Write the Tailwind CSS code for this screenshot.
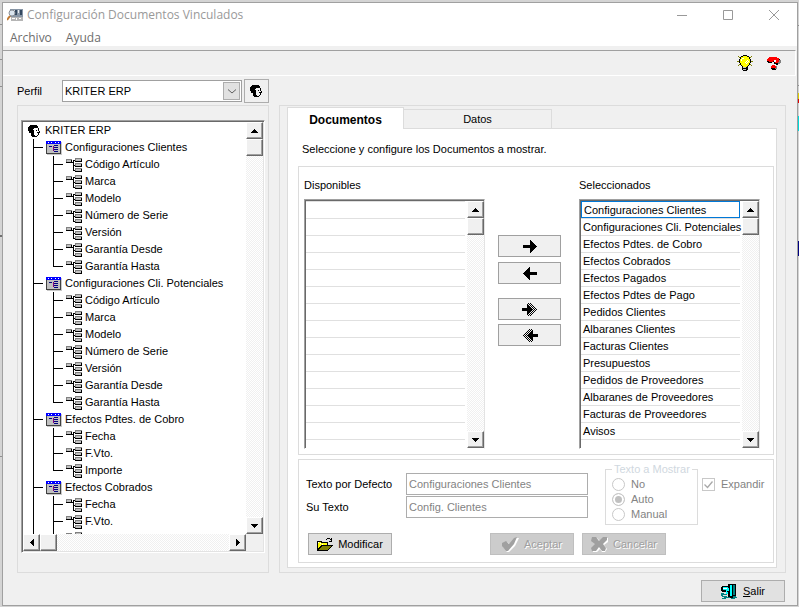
<!DOCTYPE html>
<html lang="es">
<head>
    <meta charset="UTF-8">
    <meta name="viewport" content="width=device-width, initial-scale=1.0">
    <title>Configuración Documentos Vinculados</title>
    <script src="https://cdn.jsdelivr.net/npm/@tailwindcss/browser@4"></script>
</head>
<body class="min-h-screen flex bg-[#d4d4d4] pt-[2px] pb-px font-['Liberation_Sans',sans-serif] text-[11px] leading-[17px] text-black">

    <!-- Iconos -->
    <svg class="hidden" aria-hidden="true">
        <symbol id="perfil" viewBox="0 0 13 14">
            <path d="M2 1h7v1h1v2H6v1H5v1h1v3H6v2h1v1h2v1H4v-1H3V9H1V7H0V3h1V2h1z" />
            <path d="M10 4h1v3h1v2h-1v1h-1V9h-1V8h2V7h-1zM8 6h1v1H8zM10 10h1v1h-1zM9 11h1v1H9z" />
        </symbol>
        <symbol id="documento" viewBox="0 0 16 14">
            <path fill="#c8c8c8" d="M1 1h15v13H1z" />
            <path fill="#404040" d="M0 0h15v13H0z" />
            <path fill="#c0c0c0" d="M1 3h13v9H1z" />
            <path fill="#0000ff" d="M0 0h15v3H0z" />
            <path fill="#fff" d="M2 1h1v1H2zM5 1h1v1H5zM9 1h1v1H9zM12 1h1v1h-1z" />
            <path fill="#000080" d="M3 5h3v1H3zM8 4h4v1H8zM8 6h4v1H8zM8 8h4v1H8zM8 10h4v1H8z" />
            <path fill="#800080" d="M7 5h1v5H7z" />
        </symbol>
        <symbol id="campo" viewBox="0 0 16 14">
            <path fill="#808080" d="M0 1h6v4H0zM9 0h7v4H9zM9 5h7v4H9zM9 10h7v4H9z" />
            <path fill="#c0c0c0" d="M1 2h4v2H1zM10 1h5v2h-5zM10 6h5v2h-5zM10 11h5v2h-5z" />
            <path d="M0 4h7v1H0zM5 2h1v3H5zM7 2h1v11H7zM8 2h1v1H8zM8 7h1v1H8zM8 12h1v1H8z" />
            <path d="M9 3h7v1H9zM9 8h7v1H9zM9 13h7v1H9zM15 1h1v3h-1zM15 6h1v3h-1zM15 11h1v3h-1z" />
        </symbol>
        <symbol id="arriba" viewBox="0 0 7 4"><path d="M3 0h1v1h1v1h1v1h1v1H0V3h1V2h1V1h1z" /></symbol>
        <symbol id="abajo" viewBox="0 0 7 4"><path d="M0 0h7v1H6v1H5v1H4v1H3V3H2V2H1V1H0z" /></symbol>
        <symbol id="izquierda" viewBox="0 0 4 7"><path d="M4 0v7H3V6H2V5H1V4H0V3h1V2h1V1h1V0z" /></symbol>
        <symbol id="derecha" viewBox="0 0 4 7"><path d="M0 0v7h1V6h1V5h1V4h1V3H3V2H2V1H1V0z" /></symbol>
        <symbol id="flecha" viewBox="0 0 14 13"><path d="M0 5h7V0l7 6.5L7 13V8H0z" /></symbol>
        <symbol id="doble" viewBox="0 0 16 13">
            <path fill="url(#trama)" d="M6 0h4l6 6.5L10 13H6l5-6.5z" />
            <path d="M0 5h5V0l6 6.5L5 13V8H0z" />
        </symbol>
    </svg>
    <svg class="absolute size-0" aria-hidden="true">
        <pattern id="trama" width="2" height="2" patternUnits="userSpaceOnUse">
            <path d="M0 0h1v1H0zM1 1h1v1H1z" />
        </pattern>
    </svg>

    <!-- Borde izquierdo del escritorio -->
    <div class="w-[2px] flex flex-col" aria-hidden="true">
        <div class="h-[23px] border-b border-[#909090]"></div>
        <div class="h-[35px] border-b border-[#909090]"></div>
        <div class="h-[27px] border-b border-[#909090]"></div>
        <div class="h-[150px] border-b-2 border-[#707070]"></div>
        <div class="h-[220px] border-b border-[#909090]"></div>
    </div>

    <!-- Ventana -->
    <main class="flex-1 min-w-0 flex flex-col border border-[#a0a0a0] bg-[#f0f0f0]">
        <header class="bg-white font-['Open_Sans','Noto_Sans',sans-serif] text-xs">
            <div class="flex items-center h-6 pl-1">
                <svg class="w-4 h-3" viewBox="0 0 16 12">
                    <path fill="#8795a5" d="M3 0h13v8H3z" />
                    <path fill="#e8edf2" d="M5 1h3v5H5zM11 1h1v3h-1z" />
                    <path fill="#33485f" d="M8 1h2v5H8zM13 1h2v5h-2z" />
                    <path fill="#b5b5b5" d="M4 8h12v4H4z" />
                    <path fill="#fff" d="M5 9h3v1H5zM9 9h1v2H9zM12 9h2v1h-2z" />
                    <circle cx="5" cy="4" r="3" fill="#dbe6ef" stroke="#8a9098" />
                    <path d="M3 7l-3 4" stroke="#c07830" stroke-width="2" />
                </svg>
                <h1 class="ml-1 flex-1 text-[#999]">Configuración Documentos Vinculados</h1>
                <button class="w-[46px] h-6 flex items-center justify-center" aria-label="Minimizar">
                    <svg class="w-[10px] h-[10px]" viewBox="0 0 10 10" stroke="#999"><path d="M0 5.5h10" /></svg>
                </button>
                <button class="w-[46px] h-6 flex items-center justify-center" aria-label="Maximizar">
                    <svg class="w-[10px] h-[10px]" viewBox="0 0 10 10" stroke="#999" fill="none"><path d="M.5 .5h9v9h-9z" /></svg>
                </button>
                <button class="w-[46px] h-6 flex items-center justify-center" aria-label="Cerrar">
                    <svg class="w-[10px] h-[10px]" viewBox="0 0 10 10" stroke="#999"><path d="M0 0l10 10M10 0L0 10" /></svg>
                </button>
            </div>
            <nav class="flex h-[19px] pl-[7px] gap-[14px] text-[#6d6d6d]">
                <button class="h-[22px]">Archivo</button>
                <button class="h-[22px]">Ayuda</button>
            </nav>
        </header>

        <!-- Barra de herramientas -->
        <div class="mt-1 mr-px h-[26px] border-t border-t-[#a0a0a0] border-b border-b-white border-r border-r-white flex justify-end items-center gap-[14px] pr-[14px]">
            <button aria-label="Sugerencias">
                <svg class="w-4 h-4" viewBox="0 0 16 16" shape-rendering="crispEdges">
                    <path fill="#808000" d="M1 1h1v1H1zM2 2h1v1H2zM14 1h1v1h-1zM13 2h1v1h-1zM0 6h2v1H0zM14 6h2v1h-2zM1 10h1v1H1zM2 9h1v1H2zM14 10h1v1h-1zM13 9h1v1h-1z" />
                    <path d="M6 0h4v1h2v1h1v2h1v4h-1v2h-1v1h-1v4h-1v1H6v-1H5v-4H4v-1H3V8H2V4h1V2h1V1h2z" />
                    <path fill="#ff0" d="M6 1h4v1h2v2h1v4h-1v2h-1v1h-1v1H6v-1H5v-1H4V8H3V4h1V2h2z" />
                    <path fill="#fff" d="M5 3h2v1H5zM4 4h1v2H4zM10 5h1v1h-1zM9 6h1v1H9zM11 6h1v1h-1zM10 7h1v1h-1zM8 7h1v1H8zM9 8h1v1H9z" />
                    <path fill="#c0c0c0" d="M6 12h3v1H6zM6 14h3v1H6z" />
                </svg>
            </button>
            <button aria-label="Ayuda">
                <svg class="w-[14px] h-[13px]" viewBox="0 0 14 13" shape-rendering="crispEdges">
                    <path d="M1 1h10v1h2v2h1v2h-1v1h-2v1H9V7H7V5H5v1H1V5H0V3h1zM5 9h5v3H9v1H5v-1H4v-1h1z" />
                    <path fill="#808080" d="M12 3h2v3h-1v1h-2V5h1zM8 9h2v3H8z" />
                    <path fill="red" d="M1 1h1V0h8v1h2v4h-1v1H8V4H6v1H2V4H0V2h1zM5 8h3v1h1v2H4V9h1z" />
                    <path fill="#fff" d="M7 3h2v2H7z" />
                </svg>
            </button>
        </div>

        <div class="flex gap-[10px] pl-[14px] pr-[11px] pt-[3px]">
            <!-- Perfil y árbol de documentos -->
            <section class="w-[252px] shrink-0 flex flex-col">
                <div class="flex items-center h-6">
                    <label for="perfilSelect" class="w-[45px]">Perfil</label>
                    <div class="relative flex-1">
                        <select id="perfilSelect" class="block w-full h-[22px] pl-[2px] appearance-none bg-white border border-[#a0a0a0]">
                            <option>KRITER ERP</option>
                        </select>
                        <span class="absolute right-[2px] top-[2px] w-[17px] h-[18px] border border-[#adadad] bg-[#e1e1e1] flex items-center justify-center pointer-events-none">
                            <svg class="w-2 h-[5px]" viewBox="0 0 8 5" fill="none" stroke="#606060"><path d="M0 .5l4 3.5l4-3.5" /></svg>
                        </span>
                    </div>
                    <button class="ml-[2px] w-[25px] h-6 border border-[#adadad] flex items-center justify-center" aria-label="Ver perfil">
                        <svg class="w-[13px] h-[14px]" shape-rendering="crispEdges"><use href="#perfil" /></svg>
                    </button>
                </div>
                <div class="mt-[2px] flex-1 border border-[#dcdcdc] pt-[14px] px-[3px]">
                    <div class="border-t border-l border-[#a0a0a0] border-r border-r-white border-b border-b-white bg-[#f0f0f0] shadow-[inset_1px_1px_0_#696969,inset_-1px_-1px_0_#e3e3e3] p-px">
                        <div class="flex">
                            <div id="arbol" class="flex-1 h-[412px] overflow-hidden bg-white whitespace-nowrap"></div>
                            <div class="w-[17px] flex flex-col bg-[repeating-conic-gradient(#f0f0f0_0_25%,#fff_0_50%)] bg-[length:2px_2px]">
                                <button class="size-[17px] bg-[#f0f0f0] border border-white border-r-[#696969] border-b-[#696969] shadow-[inset_-1px_-1px_0_#a0a0a0] flex items-center justify-center" aria-label="Subir"><svg class="w-[7px] h-1" shape-rendering="crispEdges"><use href="#arriba" /></svg></button>
                                <div class="h-[17px] bg-[#f0f0f0] border border-white border-r-[#696969] border-b-[#696969] shadow-[inset_-1px_-1px_0_#a0a0a0]"></div>
                                <button class="mt-auto size-[17px] bg-[#f0f0f0] border border-white border-r-[#696969] border-b-[#696969] shadow-[inset_-1px_-1px_0_#a0a0a0] flex items-center justify-center" aria-label="Bajar"><svg class="w-[7px] h-1" shape-rendering="crispEdges"><use href="#abajo" /></svg></button>
                            </div>
                        </div>
                        <div class="mr-[17px] h-[17px] flex bg-[repeating-conic-gradient(#f0f0f0_0_25%,#fff_0_50%)] bg-[length:2px_2px]">
                            <button class="size-[17px] bg-[#f0f0f0] border border-white border-r-[#696969] border-b-[#696969] shadow-[inset_-1px_-1px_0_#a0a0a0] flex items-center justify-center" aria-label="Izquierda"><svg class="w-1 h-[7px]" shape-rendering="crispEdges"><use href="#izquierda" /></svg></button>
                            <div class="w-[17px] bg-[#f0f0f0] border border-white border-r-[#696969] border-b-[#696969] shadow-[inset_-1px_-1px_0_#a0a0a0]"></div>
                            <button class="ml-auto size-[17px] bg-[#f0f0f0] border border-white border-r-[#696969] border-b-[#696969] shadow-[inset_-1px_-1px_0_#a0a0a0] flex items-center justify-center" aria-label="Derecha"><svg class="w-1 h-[7px]" shape-rendering="crispEdges"><use href="#derecha" /></svg></button>
                        </div>
                    </div>
                </div>
            </section>

            <!-- Pestañas -->
            <section class="mt-[26px] flex-1 min-w-0 border border-[#dcdcdc] pt-px pb-1 pl-[7px] pr-2">
                <div class="flex items-end" role="tablist">
                    <button class="w-[117px] h-[22px] -mb-px relative bg-white border border-b-0 border-[#dcdcdc] pt-[2px] text-xs font-bold" role="tab" aria-selected="true">Documentos</button>
                    <button class="w-[148px] h-[19px] border border-l-0 border-b-0 border-[#dcdcdc]" role="tab">Datos</button>
                </div>
                <div class="bg-white border border-[#dcdcdc] pt-3 pb-1 pl-[10px] pr-[2px]">
                    <p class="pl-1">Seleccione y configure los Documentos a mostrar.</p>

                    <div class="mt-2 border border-[#dcdcdc] flex pt-[10px] pb-[5px] pl-[5px]">
                        <div>
                            <h2>Disponibles</h2>
                            <div class="mt-[5px] w-[181px] h-[250px] flex border-t border-l border-[#a0a0a0] border-r border-r-[#e3e3e3] border-b border-b-white shadow-[inset_1px_1px_0_#696969] pt-px pl-px">
                                <ul id="disponibles" class="flex-1 mr-[2px] overflow-y-clip"></ul>
                                <div class="w-[17px] flex flex-col bg-[repeating-conic-gradient(#f0f0f0_0_25%,#fff_0_50%)] bg-[length:2px_2px]">
                                    <button class="size-[17px] bg-[#f0f0f0] border border-white border-r-[#696969] border-b-[#696969] shadow-[inset_-1px_-1px_0_#a0a0a0] flex items-center justify-center" aria-label="Subir"><svg class="w-[7px] h-1" shape-rendering="crispEdges"><use href="#arriba" /></svg></button>
                                    <div class="h-[17px] bg-[#f0f0f0] border border-white border-r-[#696969] border-b-[#696969] shadow-[inset_-1px_-1px_0_#a0a0a0]"></div>
                                    <button class="mt-auto size-[17px] bg-[#f0f0f0] border border-white border-r-[#696969] border-b-[#696969] shadow-[inset_-1px_-1px_0_#a0a0a0] flex items-center justify-center" aria-label="Bajar"><svg class="w-[7px] h-1" shape-rendering="crispEdges"><use href="#abajo" /></svg></button>
                                </div>
                            </div>
                        </div>

                        <div class="ml-[13px] mr-[18px] w-[63px] pt-[58px] flex flex-col">
                            <button class="h-[22px] border border-[#a0a0a0] bg-[#f0f0f0] flex items-center justify-center" aria-label="Añadir"><svg class="w-[14px] h-[13px]" shape-rendering="crispEdges"><use href="#flecha" /></svg></button>
                            <button class="mt-[5px] h-[22px] border border-[#a0a0a0] bg-[#f0f0f0] flex items-center justify-center" aria-label="Quitar"><svg class="w-[14px] h-[13px] rotate-180" shape-rendering="crispEdges"><use href="#flecha" /></svg></button>
                            <button class="mt-[14px] h-[22px] border border-[#a0a0a0] bg-[#f0f0f0] flex items-center justify-center" aria-label="Añadir todos"><svg class="w-4 h-[13px]" shape-rendering="crispEdges"><use href="#doble" /></svg></button>
                            <button class="mt-1 h-[22px] border border-[#a0a0a0] bg-[#f0f0f0] flex items-center justify-center" aria-label="Quitar todos"><svg class="w-4 h-[13px] rotate-180" shape-rendering="crispEdges"><use href="#doble" /></svg></button>
                        </div>

                        <div>
                            <h2>Seleccionados</h2>
                            <div class="mt-[5px] w-[181px] h-[250px] flex border-t border-l border-[#a0a0a0] border-r border-r-[#e3e3e3] border-b border-b-white shadow-[inset_1px_1px_0_#696969] pt-px pl-px">
                                <ul id="seleccionados" class="flex-1 min-w-0 mr-[2px] overflow-y-clip whitespace-nowrap"></ul>
                                <div class="w-[17px] flex flex-col bg-[repeating-conic-gradient(#f0f0f0_0_25%,#fff_0_50%)] bg-[length:2px_2px]">
                                    <button class="size-[17px] bg-[#f0f0f0] border border-white border-r-[#696969] border-b-[#696969] shadow-[inset_-1px_-1px_0_#a0a0a0] flex items-center justify-center" aria-label="Subir"><svg class="w-[7px] h-1" shape-rendering="crispEdges"><use href="#arriba" /></svg></button>
                                    <div class="h-[17px] bg-[#f0f0f0] border border-white border-r-[#696969] border-b-[#696969] shadow-[inset_-1px_-1px_0_#a0a0a0]"></div>
                                    <button class="mt-auto size-[17px] bg-[#f0f0f0] border border-white border-r-[#696969] border-b-[#696969] shadow-[inset_-1px_-1px_0_#a0a0a0] flex items-center justify-center" aria-label="Bajar"><svg class="w-[7px] h-1" shape-rendering="crispEdges"><use href="#abajo" /></svg></button>
                                </div>
                            </div>
                        </div>
                    </div>

                    <!-- Edición del texto -->
                    <form class="mt-1 border border-[#dcdcdc] pt-[2px] pb-[7px] pl-[7px]">
                        <div class="flex">
                            <div class="pt-[11px] flex flex-col gap-px">
                                <div class="flex items-center">
                                    <label for="textoDefecto" class="w-[100px]">Texto por Defecto</label>
                                    <input id="textoDefecto" class="w-[182px] h-[22px] border border-[#adadad] px-[2px] text-[#838383]" value="Configuraciones Clientes" disabled>
                                </div>
                                <div class="flex items-center">
                                    <label for="suTexto" class="w-[100px]">Su Texto</label>
                                    <input id="suTexto" class="w-[182px] h-[22px] border border-[#adadad] px-[2px] text-[#838383]" value="Config. Clientes" disabled>
                                </div>
                            </div>
                            <fieldset class="ml-[17px] w-[93px] border border-[#dcdcdc] pl-[6px] pb-[2px] leading-[15px] text-[#838383]" disabled>
                                <legend class="px-[2px] text-[#d0d8e0]">Texto a Mostrar</legend>
                                <label class="flex items-center gap-[6px]"><input type="radio" name="mostrar" class="appearance-none size-[13px] rounded-full border border-[#c8c8c8]">No</label>
                                <label class="flex items-center gap-[6px]"><input type="radio" name="mostrar" class="appearance-none size-[13px] rounded-full border border-[#c8c8c8] checked:bg-[#c0c0c0] checked:shadow-[inset_0_0_0_2px_white]" checked>Auto</label>
                                <label class="flex items-center gap-[6px]"><input type="radio" name="mostrar" class="appearance-none size-[13px] rounded-full border border-[#c8c8c8]">Manual</label>
                            </fieldset>
                            <label class="ml-1 mt-[14px] h-[17px] flex items-center gap-[6px] text-[#838383]">
                                <span class="relative size-[13px]">
                                    <input type="checkbox" class="block appearance-none size-[13px] border border-[#c8c8c8]" checked disabled>
                                    <svg class="absolute inset-0 size-[13px]" viewBox="0 0 13 13" fill="none" stroke="#a8a8a8"><path d="M2.5 6.5l3 3l5-6" stroke-width="1.3" /></svg>
                                </span>
                                Expandir
                            </label>
                        </div>
                        <div class="mt-2 flex pl-[2px]">
                            <button type="button" class="w-[84px] h-[22px] border border-[#adadad] bg-[#e1e1e1] flex items-center justify-center gap-[5px]">
                                <svg class="w-4 h-[13px]" viewBox="0 0 16 13" shape-rendering="crispEdges">
                                    <path d="M0 3h5v1h6v3h5v1h-1v1h-1v1h-1v1h-1v1h-1v1H0zM9 1h1V0h3v1h1V0h1v4h-3V3h2V2h-1V1h-3v1H9z" />
                                    <path fill="#ff0" d="M1 4h3v1h6v2H4v1H3v1H2v1H1z" />
                                    <path fill="#fff" d="M1 4h1v1H1zM3 5h1v1H3zM5 6h1v1H5z" />
                                    <path fill="#808000" d="M5 8h9v1h-1v1h-1v1h-1v1H2v-1h1v-1h1V9h1z" />
                                </svg>
                                Modificar
                            </button>
                            <button type="button" class="ml-[98px] w-[84px] h-[22px] border border-[#bfbfbf] bg-[#ccc] flex items-center justify-center gap-[5px] text-[#a0a0a0] [text-shadow:1px_1px_0_#fff]" disabled>
                                <svg class="w-[17px] h-[15px]" viewBox="0 0 17 15">
                                    <path fill="#fff" d="M1 7l4-2l3 2l6-6h3l-4 8l-6 6H5l-4-5z" />
                                    <path fill="#a0a0a0" d="M0 6l4-2l3 3l5-6l3-1l-3 7l-6 7H4L0 9z" />
                                </svg>
                                Aceptar
                            </button>
                            <button type="button" class="ml-2 w-[84px] h-[22px] border border-[#bfbfbf] bg-[#ccc] flex items-center justify-center gap-[5px] text-[#a0a0a0] [text-shadow:1px_1px_0_#fff]" disabled>
                                <svg class="w-[17px] h-[15px]" viewBox="0 0 17 15">
                                    <path fill="#fff" d="M2 1h4l3 3l4-3h4v4l-4 3l3 4l-2 3h-3l-2-3l-3 3H2v-4l4-3l-4-4z" />
                                    <path fill="#a0a0a0" d="M1 0h4l3 4l4-4h4v3l-4 4l3 4l-1 3h-3l-3-4l-3 4H1l-1-3l4-4l-4-3z" />
                                </svg>
                                Cancelar
                            </button>
                        </div>
                    </form>
                </div>
            </section>
        </div>

        <footer class="flex justify-end pt-[7px] pb-[3px] pr-3">
            <button class="w-[84px] h-[22px] border border-[#adadad] bg-[#e1e1e1] flex items-center justify-center gap-[6px]">
                <svg class="w-4 h-[15px]" viewBox="0 0 16 15" shape-rendering="crispEdges">
                    <path fill="#008080" d="M0 9h3v1h3v1H2v1h4v1H1v-1H0zM11 12h4v1h1v1h-2v1h-4v-1H3v-1h8zM1 14h4v1H1z" />
                    <path d="M1 2h6V0h8v12h-3v2H9v-1H7v-3H5V8H1V7H0V3h1z" />
                    <path fill="#0ff" d="M2 3h5v1h1v3H6v1H5V6H2zM9 1h2v11H9zM5 8h2v2H5z" />
                    <path fill="#008080" d="M12 1h2v10h-2z" />
                    <path fill="#fff" d="M2 4h4v1H2z" />
                </svg>
                <span><u>S</u>alir</span>
            </button>
        </footer>
    </main>

    <!-- Borde derecho del escritorio -->
    <div class="w-px flex flex-col" aria-hidden="true">
        <div class="h-6 border-b border-[#909090]"></div>
        <div class="h-[60px] border-b border-[#909090]"></div>
        <div class="mt-[7px] h-[6px] bg-[#e0d000]"></div>
        <div class="h-1 bg-[#e00000]"></div>
        <div class="mt-[13px] h-[15px] bg-[#00d8d8]"></div>
        <div class="mt-[110px] h-[15px] bg-[#000080]"></div>
    </div>

    <script>
        const arbol = [
            { nombre: "Configuraciones Clientes", campos: ["Código Artículo", "Marca", "Modelo", "Número de Serie", "Versión", "Garantía Desde", "Garantía Hasta"] },
            { nombre: "Configuraciones Cli. Potenciales", campos: ["Código Artículo", "Marca", "Modelo", "Número de Serie", "Versión", "Garantía Desde", "Garantía Hasta"] },
            { nombre: "Efectos Pdtes. de Cobro", campos: ["Fecha", "F.Vto.", "Importe"] },
            // el último campo queda a medias bajo la barra: solo asoma su icono
            { nombre: "Efectos Cobrados", campos: ["Fecha", "F.Vto.", ""] }
        ];

        const seleccionados = [
            "Configuraciones Clientes", "Configuraciones Cli. Potenciales", "Efectos Pdtes. de Cobro", "Efectos Cobrados",
            "Efectos Pagados", "Efectos Pdtes de Pago", "Pedidos Clientes", "Albaranes Clientes", "Facturas Clientes",
            "Presupuestos", "Pedidos de Proveedores", "Albaranes de Proveedores", "Facturas de Proveedores", "Avisos"
        ];

        // Rama horizontal; la última no sigue hacia abajo
        function rama(ultima) {
            return `<span class="w-[10px] mr-[3px] h-[17px] flex flex-col shrink-0">
                <span class="h-[9px] border-l border-b border-black"></span>
                ${ultima ? "" : '<span class="h-2 border-l border-black"></span>'}
            </span>`;
        }

        function pintarArbol() {
            let html = `<div class="flex items-center h-[17px] pl-[5px]"><svg class="w-[13px] h-[14px] mr-1 shrink-0" shape-rendering="crispEdges"><use href="#perfil" /></svg>KRITER ERP</div>`;
            arbol.forEach(doc => {
                html += `<div class="flex items-center h-[17px] pl-[10px]">${rama(false)}<svg class="w-4 h-[14px] mr-[3px] shrink-0" shape-rendering="crispEdges"><use href="#documento" /></svg>${doc.nombre}</div>`;
                doc.campos.forEach((campo, i) => {
                    html += `<div class="flex items-center h-[17px] pl-[10px]"><span class="w-5 h-[17px] border-l border-black"></span>${rama(i === doc.campos.length - 1)}<svg class="w-4 h-[14px] mr-[3px] shrink-0" shape-rendering="crispEdges"><use href="#campo" /></svg>${campo}</div>`;
                });
            });
            document.getElementById("arbol").innerHTML = html;
        }

        function pintarLista(id, filas) {
            let html = "";
            for (let i = 0; i < 15; i++) {
                const texto = filas[i] || "";
                const clase = i === 0 && texto
                    ? "h-[17px] border border-[#0078d7] pl-[2px]"
                    : "h-[17px] border-t border-[#e0e0e0] pl-[2px]";
                html += `<li class="${clase}">${texto}</li>`;
            }
            document.getElementById(id).innerHTML = html;
        }

        pintarArbol();
        pintarLista("disponibles", []);
        pintarLista("seleccionados", seleccionados);
    </script>
</body>
</html>
